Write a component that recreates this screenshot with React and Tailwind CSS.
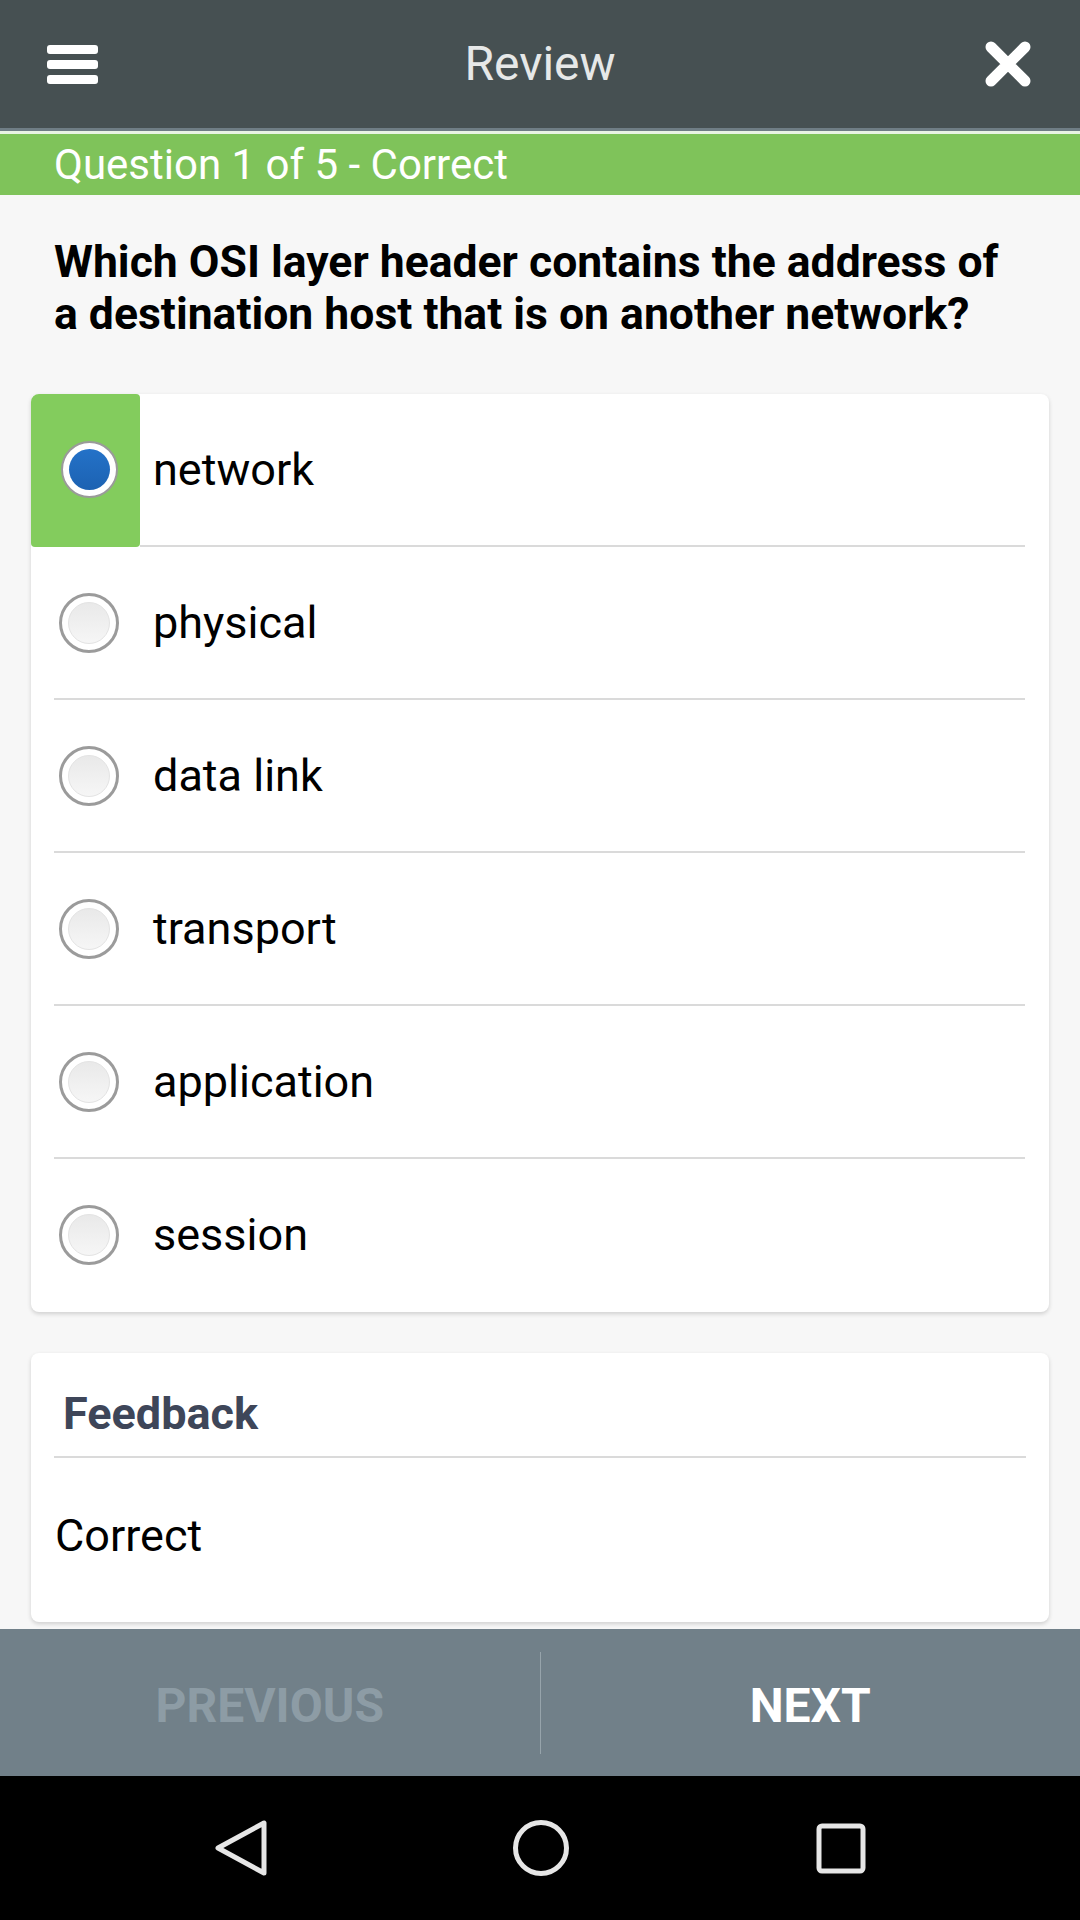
import React from "react";

const OPTIONS = ["network", "physical", "data link", "transport", "application", "session"];

function Radio({ checked }) {
  if (checked) {
    return (
      <span className="grid place-items-center h-[57px] w-[57px] rounded-full bg-white border-2 border-[#9a9a9a]">
        <span className="h-[41px] w-[41px] rounded-full bg-linear-to-b from-[#2472c8] to-[#1c62b2]" />
      </span>
    );
  }
  return (
    <span className="grid place-items-center h-[60px] w-[60px] rounded-full bg-white border-[3px] border-[#9b9b9b]">
      <span className="h-[42px] w-[42px] rounded-full border border-[#e3e3e3] bg-linear-to-b from-[#e9e9e9] to-[#f6f6f6]" />
    </span>
  );
}

export default function App() {
  return (
    <div className="flex flex-col h-[1920px] w-[1080px] bg-[#f7f7f7] font-['Roboto',sans-serif] overflow-hidden">
      {/* Top app bar */}
      <header className="grid grid-cols-[1fr_auto_1fr] items-center h-[128px] px-[47px] bg-[#465052]">
        <div className="flex flex-col gap-[6px] w-[51px]">
          <span className="h-[9px] rounded-[3px] bg-white" />
          <span className="h-[9px] rounded-[3px] bg-white" />
          <span className="h-[9px] rounded-[3px] bg-white" />
        </div>
        <h1 className="text-[48px] text-[#e6e8e8] leading-none">Review</h1>
        <div className="justify-self-end mr-[1px]">
          <svg width="48" height="48" viewBox="0 0 48 48">
            <path d="M7 7L41 41M41 7L7 41" stroke="#fff" strokeWidth="11" strokeLinecap="round" />
          </svg>
        </div>
      </header>
      <div className="h-[3px] bg-[#6f7d85]" />
      <div className="h-[3px] bg-[#e9f3e4]" />
      <div className="flex items-center h-[61px] px-[54px] bg-[#7fc35a]">
        <span className="text-[42px] text-white leading-none">Question 1 of 5 - Correct</span>
      </div>

      <main className="flex-1">
        <p className="mt-[41px] pl-[54px] pr-[56px] text-[44.5px] leading-[52px] font-bold text-black">
          Which OSI layer header contains the address of a destination host that is on another network?
        </p>

        {/* Answer options */}
        <div className="mt-[54px] mx-[31px] rounded-lg bg-white shadow-[0_2px_4px_rgba(0,0,0,0.16)]">
          {OPTIONS.map((label, i) => {
            const selected = i === 0;
            const last = i === OPTIONS.length - 1;
            return (
              <div key={label} className="flex h-[153px]">
                <div
                  className={
                    selected
                      ? "flex w-[109px] shrink-0 bg-[#83cc5d] rounded-tl-lg rounded-tr-[4px] rounded-b-[4px]"
                      : "flex w-[109px] shrink-0"
                  }
                >
                  <div
                    className={
                      selected || last
                        ? "flex flex-1 items-center ml-[23px] pl-[5px] pb-[2px]"
                        : "flex flex-1 items-center ml-[23px] pl-[5px] border-b-2 border-[#dadada]"
                    }
                  >
                    <span className="grid place-items-center h-[60px] w-[60px]">
                      <Radio checked={selected} />
                    </span>
                  </div>
                </div>
                <div
                  className={
                    last
                      ? "flex flex-1 items-center mr-[24px] pl-[13px] pb-[2px]"
                      : "flex flex-1 items-center mr-[24px] pl-[13px] border-b-2 border-[#dadada]"
                  }
                >
                  <span className="text-[45px] text-black leading-none">{label}</span>
                </div>
              </div>
            );
          })}
        </div>

        {/* Feedback */}
        <div className="mt-[41px] mx-[31px] rounded-lg bg-white shadow-[0_2px_4px_rgba(0,0,0,0.16)]">
          <div className="flex items-center h-[103px] pt-[17px] pl-[32px]">
            <span className="text-[45px] font-bold text-[#3e4659] leading-none">Feedback</span>
          </div>
          <div className="mx-[23px] h-[2px] bg-[#dadada]" />
          <div className="flex items-center h-[164px] pb-[10px] pl-[24px]">
            <span className="text-[45px] text-black leading-none">Correct</span>
          </div>
        </div>
      </main>

      {/* Prev / Next bar */}
      <div className="flex items-center h-[147px] bg-[#718089]">
        <div className="flex flex-1 justify-center pt-[6px]">
          <span className="text-[48px] font-bold text-[#8d9ca5] leading-none">PREVIOUS</span>
        </div>
        <div className="w-px h-[102px] bg-[#97a4ab]" />
        <div className="flex flex-1 justify-center pt-[6px]">
          <span className="text-[48px] font-bold text-white leading-none">NEXT</span>
        </div>
      </div>

      {/* System nav */}
      <nav className="flex items-center justify-center gap-[240px] h-[144px] bg-black pl-[1px]">
        <svg width="60" height="60" viewBox="0 0 60 60">
          <path d="M7 30L53 5V55Z" fill="none" stroke="#e6e6e6" strokeWidth="5" strokeLinejoin="round" />
        </svg>
        <svg width="60" height="60" viewBox="0 0 60 60">
          <circle cx="30" cy="30" r="25.5" fill="none" stroke="#e6e6e6" strokeWidth="5" />
        </svg>
        <svg width="60" height="60" viewBox="0 0 60 60">
          <rect x="8" y="8" width="44" height="45" rx="3" fill="none" stroke="#e6e6e6" strokeWidth="5" />
        </svg>
      </nav>
    </div>
  );
}
